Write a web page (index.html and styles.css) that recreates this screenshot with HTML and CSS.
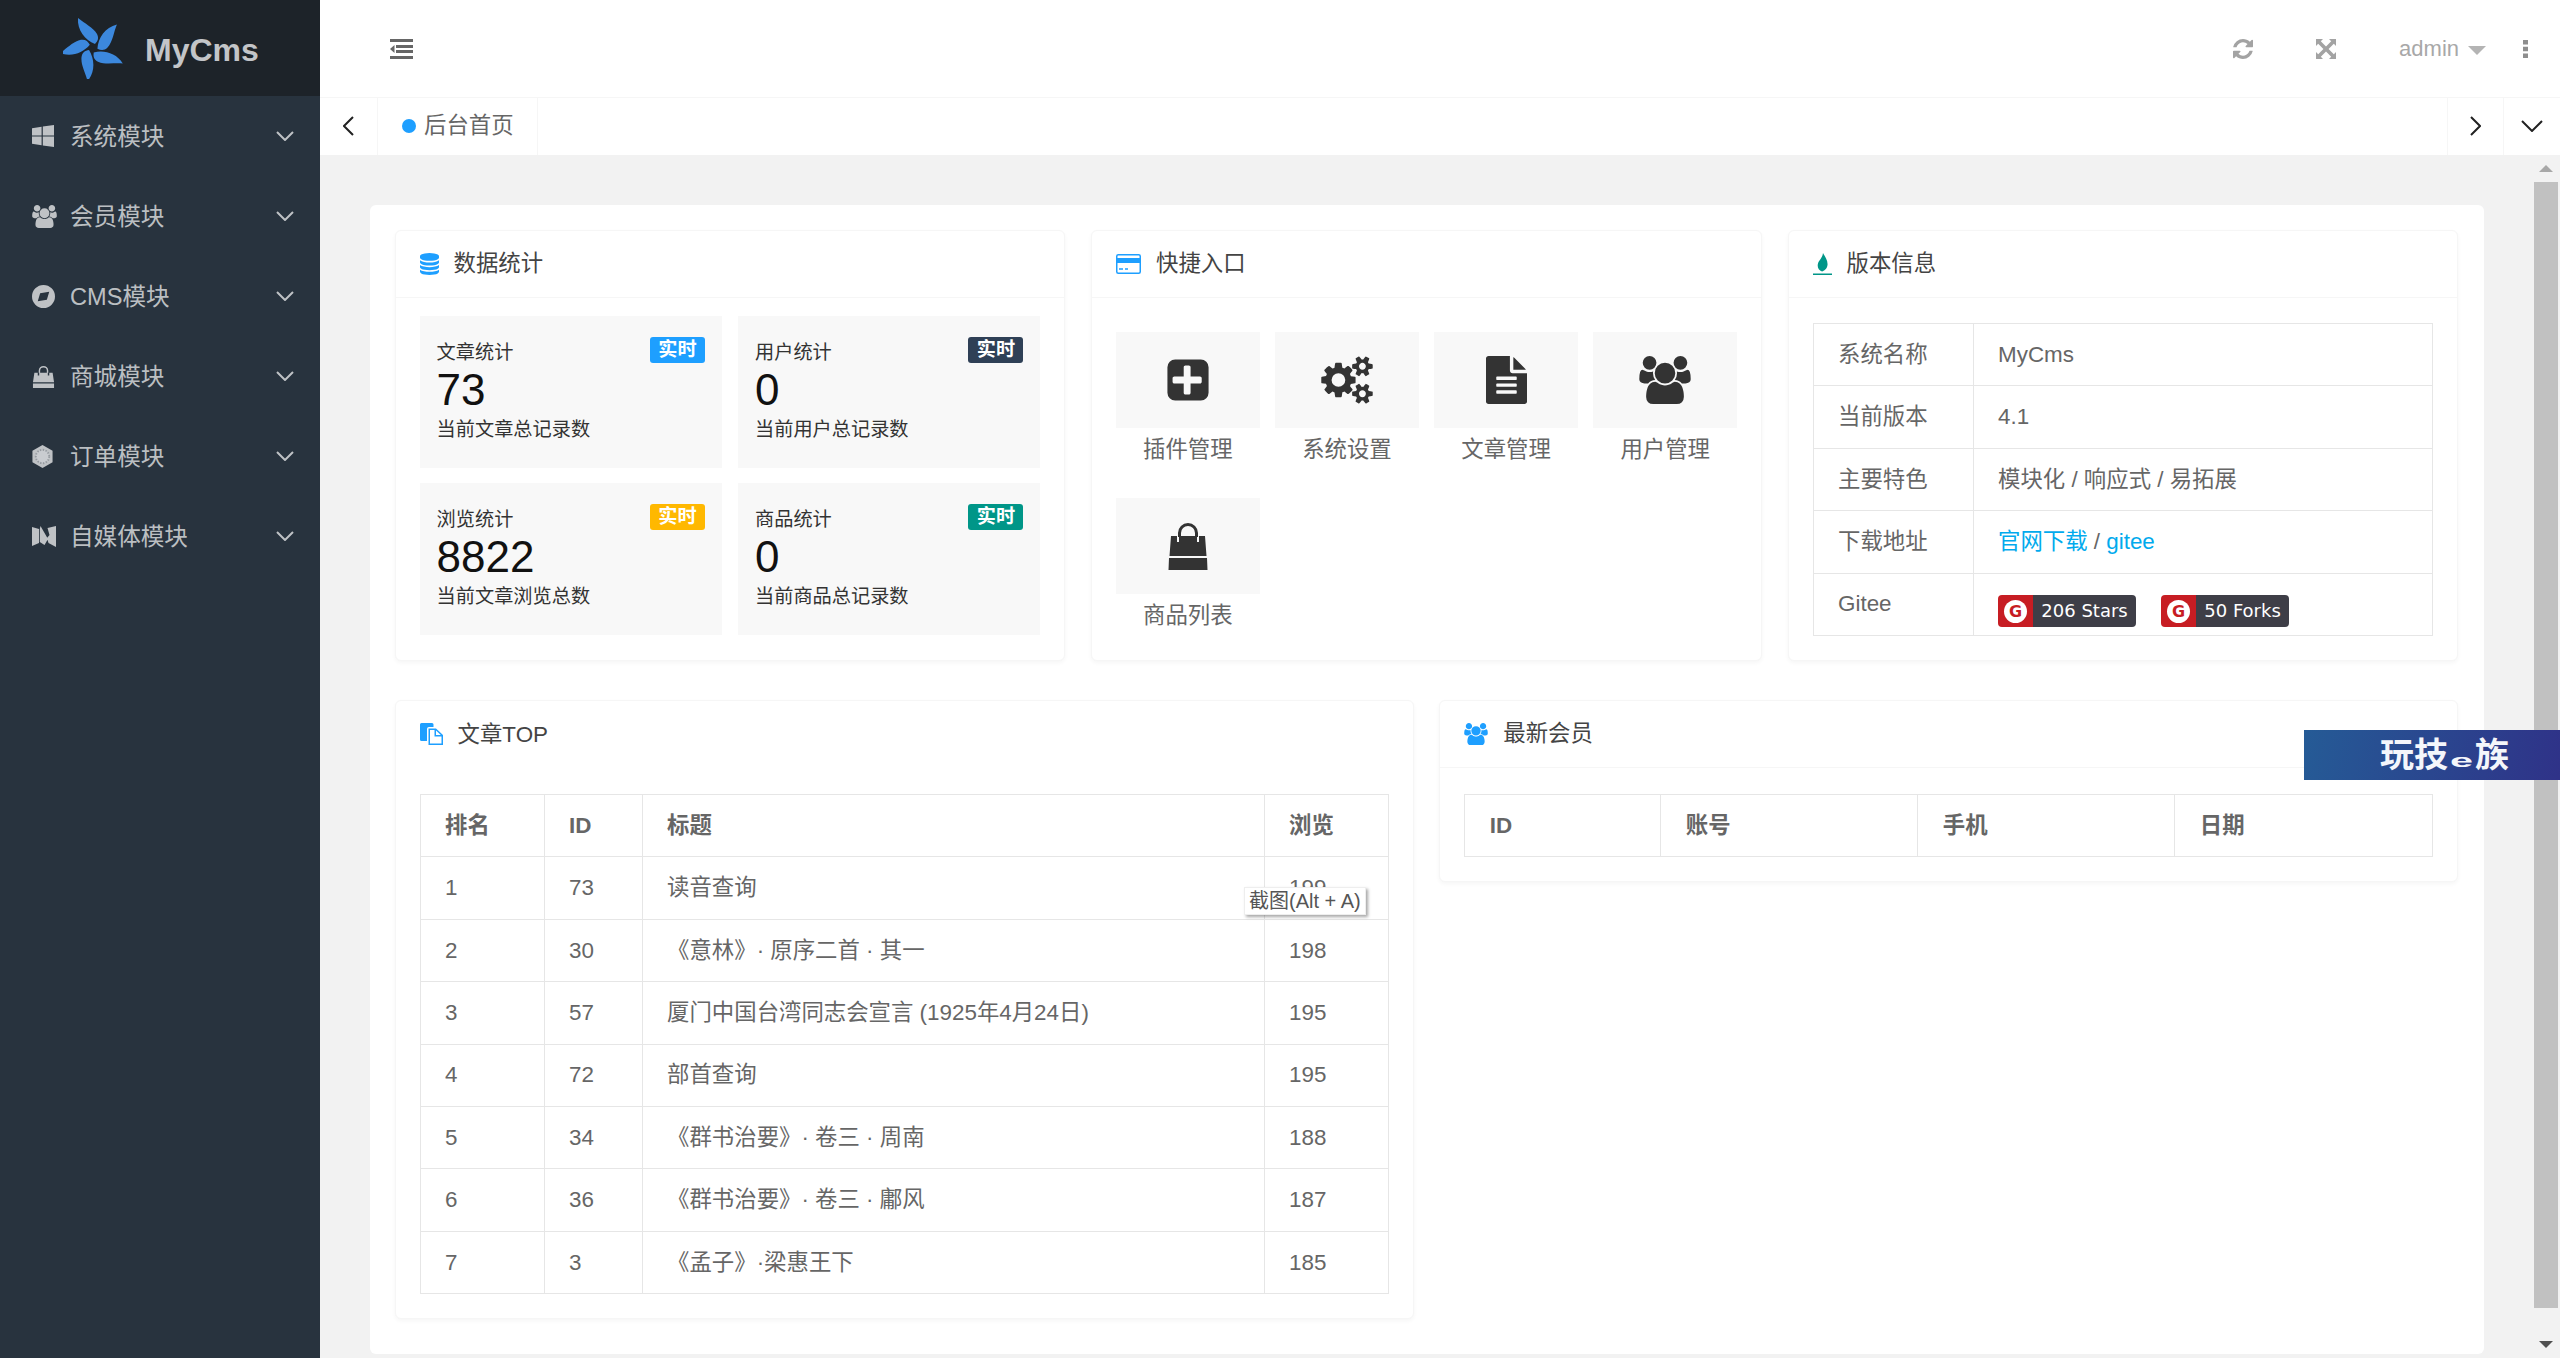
FILE: index.html
```html
<!DOCTYPE html>
<html lang="zh-CN">
<head>
  <meta charset="UTF-8">
  <title>MyCms</title>
  <link rel="stylesheet" href="styles.css">
</head>
<body>
  <svg class="icon-defs" width="0" height="0" aria-hidden="true">
    <defs>
      <path id="i-users" d="M593 896q-162 5-265 128h-134q-82 0-138-40.5t-56-118.5q0-353 124-353 6 0 43.5 21t97.5 42.5 119 21.5q67 0 133-23-5 37-5 66 0 139 81 256zm1071 637q0 120-73 189.5t-194 69.5h-874q-121 0-194-69.5t-73-189.5q0-53 3.5-103.5t14-109 26.5-108.5 43-97.5 62-81 85.5-53.5 111.5-20q10 0 43 21.5t73 48 107 48 135 21.5 135-21.5 107-48 73-48 43-21.5q61 0 111.5 20t85.5 53.5 62 81 43 97.5 26.5 108.5 14 109 3.5 103.5zm-1024-1277q0 106-75 181t-181 75-181-75-75-181 75-181 181-75 181 75 75 181zm704 384q0 159-112.5 271.5t-271.5 112.5-271.5-112.5-112.5-271.5 112.5-271.5 271.5-112.5 271.5 112.5 112.5 271.5zm576 225q0 78-56 118.5t-138 40.5h-134q-103-123-265-128 81-117 81-256 0-29-5-66 66 23 133 23 59 0 119-21.5t97.5-42.5 43.5-21q124 0 124 353zm-128-609q0 106-75 181t-181 75-181-75-75-181 75-181 181-75 181 75 75 181z"/>
      <polyline id="i-down" points="1,1 9,9 17,1" fill="none" stroke="currentColor" stroke-width="2"/>
      <path id="blade" d="M2-4C-8-8-16-18-15-30-8-24 0-21 4-14 6-10 5-7 2-4Z"/>
    </defs>
  </svg>

  <aside class="sidebar">
    <div class="logo">
      <svg width="60" height="62" viewBox="-30 -31 60 62" fill="#3c88dd">
        <use href="#blade"/>
        <use href="#blade" transform="rotate(72)"/>
        <use href="#blade" transform="rotate(144)"/>
        <use href="#blade" transform="rotate(216)"/>
        <use href="#blade" transform="rotate(288)"/>
      </svg>
      <span class="logo-text">MyCms</span>
    </div>
    <ul class="menu">
      <li class="menu-item">
        <span class="menu-icon">
          <svg width="22" height="22" viewBox="0 0 22 22" fill="currentColor"><path d="M0 3.2 9.6 1.8V10.4H0ZM10.8 1.6 22 0V10.4H10.8ZM0 11.6H9.6V20.2L0 18.8ZM10.8 11.6H22V22L10.8 20.4Z"/></svg>
        </span>
        <span class="menu-text">系统模块</span>
        <svg class="menu-arrow" width="18" height="10" viewBox="0 0 18 10"><use href="#i-down"/></svg>
      </li>
      <li class="menu-item">
        <span class="menu-icon">
          <svg width="25" height="23" viewBox="0 0 1920 1792" fill="currentColor"><use href="#i-users"/></svg>
        </span>
        <span class="menu-text">会员模块</span>
        <svg class="menu-arrow" width="18" height="10" viewBox="0 0 18 10"><use href="#i-down"/></svg>
      </li>
      <li class="menu-item">
        <span class="menu-icon">
          <svg width="23" height="23" viewBox="0 0 24 24" fill="currentColor"><path fill-rule="evenodd" d="M12 0a12 12 0 1 0 0 24 12 12 0 0 0 0-24ZM8.5 8.5 18 7l-2.500 8.500L6 17Z"/></svg>
        </span>
        <span class="menu-text">CMS模块</span>
        <svg class="menu-arrow" width="18" height="10" viewBox="0 0 18 10"><use href="#i-down"/></svg>
      </li>
      <li class="menu-item">
        <span class="menu-icon">
          <svg width="23" height="23" viewBox="0 0 24 24" fill="currentColor"><path d="M7 8V6a5 5 0 0 1 10 0v2h-1.500V6a3.500 3.500 0 0 0-7 0v2ZM2.500 8H6v3h1.500V8h9v3H18V8h3.500L23 18H1ZM1 19.200H23V24H1Z"/></svg>
        </span>
        <span class="menu-text">商城模块</span>
        <svg class="menu-arrow" width="18" height="10" viewBox="0 0 18 10"><use href="#i-down"/></svg>
      </li>
      <li class="menu-item">
        <span class="menu-icon">
          <svg width="21" height="23" viewBox="0 0 21 24"><path fill="currentColor" d="M10.500 0 21 6V18L10.500 24 0 18V6Z"/><circle cx="10.500" cy="12" r="7" fill="#c9ccd0" stroke="#959aa0" stroke-dasharray="1.500 1.500" stroke-width="2"/></svg>
        </span>
        <span class="menu-text">订单模块</span>
        <svg class="menu-arrow" width="18" height="10" viewBox="0 0 18 10"><use href="#i-down"/></svg>
      </li>
      <li class="menu-item">
        <span class="menu-icon">
          <svg width="24" height="21" viewBox="0 0 24 21" fill="currentColor"><path d="M0 1 7 3 7 17 0 20ZM8.500 0 16 13 12.500 19 7.800 16V3ZM15.500 2 24 0V18L24 21 16.500 17 15 12 17.500 9Z"/></svg>
        </span>
        <span class="menu-text">自媒体模块</span>
        <svg class="menu-arrow" width="18" height="10" viewBox="0 0 18 10"><use href="#i-down"/></svg>
      </li>
    </ul>
  </aside>

  <div class="main">
    <header class="topbar">
      <svg class="toggle" width="23" height="20" viewBox="0 0 23 20" fill="#666"><path d="M0 0H23V3H0ZM6 6H23V9H6ZM6 11H23V14H6ZM0 17H23V20H0ZM4.500 6V14L0 10Z"/></svg>
      <div class="top-right">
        <svg class="top-icon" width="20" height="20" viewBox="128 128 1536 1536" fill="#a3a3a3"><path d="M1639 1056q0 5-1 7-64 268-268 434.500t-478 166.500q-146 0-282.500-55t-243.500-157l-129 129q-19 19-45 19t-45-19-19-45v-448q0-26 19-45t45-19h448q26 0 45 19t19 45-19 45l-137 137q71 66 161 102t187 36q134 0 250-65t186-179q11-17 53-117 8-23 30-23h192q13 0 22.500 9.500t9.500 22.500zm25-800v448q0 26-19 45t-45 19h-448q-26 0-45-19t-19-45 19-45l138-138q-148-137-349-137-134 0-250 65t-186 179q-11 17-53 117-8 23-30 23h-199q-13 0-22.500-9.500t-9.500-22.500v-7q65-268 270-434.500t480-166.500q146 0 284 55.500t245 156.500l130-129q19-19 45-19t45 19 19 45z"/></svg>
        <svg class="top-icon" width="20" height="20" viewBox="0 0 20 20" fill="#a3a3a3"><path d="M0 0H7L4.800 2.200 10 7.400 15.200 2.200 13 0H20V7L17.800 4.800 12.600 10 17.800 15.200 20 13V20H13L15.200 17.800 10 12.600 4.800 17.800 7 20H0V13L2.200 15.200 7.400 10 2.200 4.800 0 7Z"/></svg>
        <span class="user-name">admin</span>
        <span class="caret"></span>
        <svg class="dots" width="5" height="18" viewBox="0 0 5 18" fill="#8e8e8e"><path d="M0 0H5V4.500H0ZM0 6.700H5V11.200H0ZM0 13.500H5V18H0Z"/></svg>
      </div>
    </header>

    <nav class="tabbar">
      <div class="tab-btn tab-btn-left">
        <svg width="11" height="20" viewBox="0 0 11 20"><polyline points="10,1 1,10 10,19" fill="none" stroke="#222" stroke-width="2"/></svg>
      </div>
      <div class="tab"><span class="tab-dot"></span>后台首页</div>
      <div class="tab-space"></div>
      <div class="tab-btn tab-btn-right">
        <svg width="11" height="20" viewBox="0 0 11 20"><polyline points="1,1 10,10 1,19" fill="none" stroke="#222" stroke-width="2"/></svg>
      </div>
      <div class="tab-btn tab-btn-menu">
        <svg width="22" height="12" viewBox="0 0 22 12"><polyline points="1,1 11,11 21,1" fill="none" stroke="#222" stroke-width="2"/></svg>
      </div>
    </nav>

    <div class="body-wrap">
      <div class="content">
        <div class="panel">
          <div class="row-three">
            <section class="card">
              <div class="card-head">
                <svg width="19" height="22" viewBox="128 0 1536 1792" fill="#1e9fff" preserveAspectRatio="none"><path d="M896 768q237 0 443-43t325-127v170q0 69-103 128t-280 93.500-385 34.500-385-34.500-280-93.500-103-128v-170q119 84 325 127t443 43zm0 768q237 0 443-43t325-127v170q0 69-103 128t-280 93.500-385 34.500-385-34.500-280-93.500-103-128v-170q119 84 325 127t443 43zm0-384q237 0 443-43t325-127v170q0 69-103 128t-280 93.500-385 34.500-385-34.500-280-93.500-103-128v-170q119 84 325 127t443 43zm0-1152q208 0 385 34.500t280 93.500 103 128v128q0 69-103 128t-280 93.500-385 34.500-385-34.500-280-93.500-103-128v-128q0-69 103-128t280-93.500 385-34.500z"/></svg>
                <span>数据统计</span>
              </div>
              <div class="stat-grid">
                <div class="stat">
                  <div class="stat-top"><span>文章统计</span><span class="badge badge-blue">实时</span></div>
                  <div class="stat-num">73</div>
                  <div class="stat-sub">当前文章总记录数</div>
                </div>
                <div class="stat">
                  <div class="stat-top"><span>用户统计</span><span class="badge badge-navy">实时</span></div>
                  <div class="stat-num">0</div>
                  <div class="stat-sub">当前用户总记录数</div>
                </div>
                <div class="stat">
                  <div class="stat-top"><span>浏览统计</span><span class="badge badge-orange">实时</span></div>
                  <div class="stat-num">8822</div>
                  <div class="stat-sub">当前文章浏览总数</div>
                </div>
                <div class="stat">
                  <div class="stat-top"><span>商品统计</span><span class="badge badge-green">实时</span></div>
                  <div class="stat-num">0</div>
                  <div class="stat-sub">当前商品总记录数</div>
                </div>
              </div>
            </section>

            <section class="card">
              <div class="card-head">
                <svg width="25" height="20" viewBox="0 0 25 20"><rect x="0.750" y="0.750" width="23.500" height="18.500" rx="1.500" fill="#fff" stroke="#1e9fff" stroke-width="1.500"/><rect x="0" y="4" width="25" height="5" fill="#1e9fff"/><path d="M3 15H7M9 15H12" stroke="#1e9fff" stroke-width="1.500"/></svg>
                <span>快捷入口</span>
              </div>
              <div class="quick-grid">
                <div class="quick">
                  <div class="quick-tile"><svg width="48" height="48" viewBox="0 0 1792 1792" fill="#333"><path d="M1408 960v-128q0-26-19-45t-45-19h-352v-352q0-26-19-45t-45-19h-128q-26 0-45 19t-19 45v352h-352q-26 0-45 19t-19 45v128q0 26 19 45t45 19h352v352q0 26 19 45t45 19h128q26 0 45-19t19-45v-352h352q26 0 45-19t19-45zm256-544v960q0 119-84.500 203.500t-203.500 84.500h-960q-119 0-203.500-84.500t-84.500-203.500v-960q0-119 84.500-203.500t203.500-84.500h960q119 0 203.500 84.500t84.500 203.500z"/></svg></div>
                  <div class="quick-label">插件管理</div>
                </div>
                <div class="quick">
                  <div class="quick-tile"><svg width="52" height="48" viewBox="0 0 1920 1792" fill="#333"><path d="M896 896q0-106-75-181t-181-75-181 75-75 181 75 181 181 75 181-75 75-181zm768 512q0-52-38-90t-90-38-90 38-38 90q0 53 37.500 90.500t90.500 37.500 90.500-37.500 37.500-90.500zm0-1024q0-52-38-90t-90-38-90 38-38 90q0 53 37.500 90.500t90.500 37.500 90.500-37.500 37.500-90.500zm-384 421v185q0 10-7 19.500t-16 10.500l-155 24q-11 35-32 76 34 48 90 115 7 11 7 20 0 12-7 19-23 30-82.500 89.500t-78.500 59.500q-11 0-21-7l-115-90q-37 19-77 31-11 108-23 155-7 24-30 24h-186q-11 0-20-7.500t-10-17.500l-23-153q-34-10-75-31l-118 89q-7 7-20 7-11 0-21-8-144-133-144-160 0-9 7-19 10-14 41-53t47-61q-23-44-35-82l-152-24q-10-1-17-9.500t-7-19.500v-185q0-10 7-19.500t16-10.500l155-24q11-35 32-76-34-48-90-115-7-11-7-20 0-12 7-20 22-30 82-89t79-59q11 0 21 7l115 90q34-18 77-32 11-108 23-154 7-24 30-24h186q11 0 20 7.500t10 17.500l23 153q34 10 75 31l118-89q8-7 20-7 11 0 21 8 144 133 144 160 0 8-7 19-12 16-42 54t-45 60q23 48 34 82l152 23q10 2 17 10.500t7 19.500zm640 533v140q0 16-149 31-12 27-30 52 51 113 51 138 0 4-4 7-122 71-124 71-8 0-46-47t-52-68q-20 2-30 2t-30-2q-14 21-52 68t-46 47q-2 0-124-71-4-3-4-7 0-25 51-138-18-25-30-52-149-15-149-31v-140q0-16 149-31 13-29 30-52-51-113-51-138 0-4 4-7 4-2 35-20t59-34 30-16q8 0 46 46.500t52 67.500q20-2 30-2t30 2q51-71 92-112l6-2q4 0 124 70 4 3 4 7 0 25-51 138 17 23 30 52 149 15 149 31zm0-1024v140q0 16-149 31-12 27-30 52 51 113 51 138 0 4-4 7-122 71-124 71-8 0-46-47t-52-68q-20 2-30 2t-30-2q-14 21-52 68t-46 47q-2 0-124-71-4-3-4-7 0-25 51-138-18-25-30-52-149-15-149-31v-140q0-16 149-31 13-29 30-52-51-113-51-138 0-4 4-7 4-2 35-20t59-34 30-16q8 0 46 46.500t52 67.500q20-2 30-2t30 2q51-71 92-112l6-2q4 0 124 70 4 3 4 7 0 25-51 138 17 23 30 52 149 15 149 31z"/></svg></div>
                  <div class="quick-label">系统设置</div>
                </div>
                <div class="quick">
                  <div class="quick-tile"><svg width="41" height="48" viewBox="128 0 1536 1792" fill="#333" preserveAspectRatio="none"><path d="M1596 476q14 14 28 36h-472v-472q22 14 36 28zm-476 164h544v1056q0 40-28 68t-68 28h-1344q-40 0-68-28t-28-68v-1600q0-40 28-68t68-28h800v544q0 40 28 68t68 28zm160 736v-64q0-14-9-23t-23-9h-704q-14 0-23 9t-9 23v64q0 14 9 23t23 9h704q14 0 23-9t9-23zm0-256v-64q0-14-9-23t-23-9h-704q-14 0-23 9t-9 23v64q0 14 9 23t23 9h704q14 0 23-9t9-23zm0-256v-64q0-14-9-23t-23-9h-704q-14 0-23 9t-9 23v64q0 14 9 23t23 9h704q14 0 23-9t9-23z"/></svg></div>
                  <div class="quick-label">文章管理</div>
                </div>
                <div class="quick">
                  <div class="quick-tile"><svg width="52" height="48" viewBox="0 0 1920 1792" fill="#333"><use href="#i-users"/></svg></div>
                  <div class="quick-label">用户管理</div>
                </div>
                <div class="quick">
                  <div class="quick-tile"><svg width="48" height="48" viewBox="0 0 48 48" fill="#333"><path d="M14 15V11a10 10 0 0 1 20 0v4H31V11a7 7 0 0 0-14 0v4ZM7 14H13V20H15V14H33V20H35V14H41L42.500 34H5.500ZM5 36H43L43.500 48H4.500Z"/></svg></div>
                  <div class="quick-label">商品列表</div>
                </div>
              </div>
            </section>

            <section class="card">
              <div class="card-head">
                <svg width="19" height="22" viewBox="0 0 19 22" fill="#009688"><path d="M10 0C12 4 15 7 14.500 12 14 16 11 18 9 18.500 5.500 17.500 4 14 5 10.500 6 7 9.500 5 10 0ZM0 20.500H19V22H0Z"/></svg>
                <span>版本信息</span>
              </div>
              <div class="card-body">
                <table class="data-table info-table">
                  <tr><td class="col-label">系统名称</td><td>MyCms</td></tr>
                  <tr><td>当前版本</td><td>4.1</td></tr>
                  <tr><td>主要特色</td><td>模块化 / 响应式 / 易拓展</td></tr>
                  <tr><td>下载地址</td><td class="link-cell"><a href="#">官网下载</a> / <a href="#">gitee</a></td></tr>
                  <tr>
                    <td>Gitee</td>
                    <td class="badge-cell">
                      <div class="gitee-row">
                        <span class="gitee-badge gitee-stars"><span class="gitee-logo"><span class="gitee-g">G</span></span><span class="gitee-count">206 Stars</span></span>
                        <span class="gitee-badge gitee-forks"><span class="gitee-logo"><span class="gitee-g">G</span></span><span class="gitee-count">50 Forks</span></span>
                      </div>
                    </td>
                  </tr>
                </table>
              </div>
            </section>
          </div>

          <div class="row-two">
            <section class="card">
              <div class="card-head no-line">
                <svg width="23" height="22" viewBox="0 0 23 22" fill="#1e9fff"><path d="M0 1.500Q0 0 1.500 0H12Q13.500 0 13.500 1.500V4H9Q7 4 7 6V18H1.500Q0 18 0 16.500Z"/><path fill-rule="evenodd" d="M8.500 5.500H16L23 12V22H8.500ZM10 7V20.500H21.500V13.500H14.500V7ZM16 7.500V12H20.800Z"/></svg>
                <span>文章TOP</span>
              </div>
              <div class="card-body">
                <table class="data-table top-table">
                  <thead>
                    <tr><th class="col-rank">排名</th><th class="col-id">ID</th><th class="col-title">标题</th><th>浏览</th></tr>
                  </thead>
                  <tbody>
                    <tr><td>1</td><td>73</td><td>读音查询</td><td>199</td></tr>
                    <tr><td>2</td><td>30</td><td>《意林》· 原序二首 · 其一</td><td>198</td></tr>
                    <tr><td>3</td><td>57</td><td>厦门中国台湾同志会宣言 (1925年4月24日)</td><td>195</td></tr>
                    <tr><td>4</td><td>72</td><td>部首查询</td><td>195</td></tr>
                    <tr><td>5</td><td>34</td><td>《群书治要》· 卷三 · 周南</td><td>188</td></tr>
                    <tr><td>6</td><td>36</td><td>《群书治要》· 卷三 · 鄘风</td><td>187</td></tr>
                    <tr><td>7</td><td>3</td><td>《孟子》·梁惠王下</td><td>185</td></tr>
                  </tbody>
                </table>
              </div>
            </section>

            <section class="card">
              <div class="card-head">
                <svg width="24" height="22" viewBox="0 0 1920 1792" fill="#1e9fff"><use href="#i-users"/></svg>
                <span>最新会员</span>
              </div>
              <div class="card-body">
                <table class="data-table member-table">
                  <thead>
                    <tr><th class="col-mid">ID</th><th class="col-account">账号</th><th class="col-phone">手机</th><th>日期</th></tr>
                  </thead>
                </table>
              </div>
            </section>
          </div>
        </div>
      </div>

      <div class="scrollbar">
        <div class="scroll-btn"><span class="arrow-up"></span></div>
        <div class="scroll-thumb"></div>
        <div class="scroll-btn scroll-btn-down"><span class="arrow-down"></span></div>
      </div>
    </div>
  </div>

  <div class="tooltip">截图(Alt + A)</div>
  <div class="watermark">玩技<span class="watermark-e">e</span>族</div>
</body>
</html>
```

FILE: styles.css
```css
* {
  box-sizing: border-box;
}

html, body {
  margin: 0;
  padding: 0;
  height: 100%;
}

body {
  position: relative;
  display: flex;
  height: 100vh;
  overflow: hidden;
  font-family: "Liberation Sans", "Noto Sans CJK SC", sans-serif;
  font-size: 22.4px;
  line-height: 1.5;
  text-spacing-trim: space-all;
  color: #666;
  background-color: #f2f2f2;
}

.icon-defs {
  position: absolute;
}

/* sidebar */
.sidebar {
  width: 320px;
  flex-shrink: 0;
  background-color: #28333e;
  color: rgba(255, 255, 255, 0.7);
}

.logo {
  height: 96px;
  display: flex;
  align-items: center;
  padding-left: 63px;
  gap: 22px;
  background-color: #1d2329;
}

.logo-text {
  margin-top: 4px;
  font-size: 32px;
  font-weight: bold;
  color: #c3c5c8;
}

.menu {
  list-style: none;
  margin: 0;
  padding: 0;
}

.menu-item {
  height: 80px;
  display: flex;
  align-items: center;
  padding: 0 26px 0 32px;
  font-size: 23.6px;
}

.menu-icon {
  width: 38px;
  height: 24px;
  display: flex;
  align-items: center;
}

.menu-text {
  flex: 1;
  padding-top: 3px;
}

.menu-arrow {
  flex-shrink: 0;
}

/* top */
.main {
  flex: 1;
  min-width: 0;
  display: flex;
  flex-direction: column;
}

.topbar {
  height: 97px;
  flex-shrink: 0;
  display: flex;
  align-items: center;
  justify-content: space-between;
  padding: 0 32px 0 70px;
  background-color: #fff;
}

.top-right {
  display: flex;
  align-items: center;
  color: #a3a3a3;
}

.top-icon {
  margin-right: 63px;
}

.user-name {
  font-size: 22px;
  color: #a8a8a8;
}

.caret {
  width: 0;
  height: 0;
  margin: 4px 37px 0 9px;
  border-left: 9px solid transparent;
  border-right: 9px solid transparent;
  border-top: 9px solid #b4b4b4;
}

.tabbar {
  height: 58px;
  flex-shrink: 0;
  display: flex;
  background-color: #fff;
  border-top: 1px solid #f6f6f6;
}

.tab-btn {
  display: flex;
  align-items: center;
  justify-content: center;
  width: 56px;
  padding-bottom: 2px;
}

.tab-btn-left {
  width: 58px;
  border-right: 1px solid #f6f6f6;
}

.tab-btn-right,
.tab-btn-menu {
  border-left: 1px solid #f6f6f6;
}

.tab-btn-menu {
  width: 57px;
}

.tab {
  width: 160px;
  display: flex;
  align-items: center;
  padding: 0 0 1px 24px;
  border-right: 1px solid #f6f6f6;
  color: #666;
}

.tab-dot {
  width: 14px;
  height: 14px;
  margin-right: 8px;
  border-radius: 50%;
  background-color: #1e9fff;
}

.tab-space {
  flex: 1;
}

/* content */
.body-wrap {
  flex: 1;
  min-height: 0;
  display: flex;
}

.content {
  flex: 1;
  min-width: 0;
  padding: 50px 50px 0;
}

.panel {
  padding: 25px 25.6px 35px 24.6px;
  border-radius: 6px;
  background-color: #fff;
}

.row-three {
  display: grid;
  grid-template-columns: repeat(3, 1fr);
  column-gap: 25.6px;
  margin-bottom: 39px;
}

.row-two {
  display: grid;
  grid-template-columns: repeat(2, 1fr);
  column-gap: 25.6px;
  align-items: start;
}

.row-two .card-body {
  padding-top: 26px;
}

.card {
  border: 1px solid #f6f6f6;
  border-radius: 6px;
  background-color: #fff;
  box-shadow: 0 2px 4px rgba(0, 0, 0, 0.04);
}

.card-head {
  height: 67px;
  display: flex;
  align-items: center;
  gap: 15px;
  padding-left: 24px;
  border-bottom: 1px solid #f6f6f6;
  color: #444;
}

.card-head.no-line {
  border-bottom: none;
}

.card-body {
  padding: 25px 24px 24px;
}

/* stats */
.stat-grid {
  display: grid;
  grid-template-columns: 1fr 1fr;
  gap: 15px 16px;
  padding: 18px 24px 23px;
}

.stat {
  height: 152px;
  padding: 21px 17px 0;
  background-color: #f8f8f8;
  font-size: 19.2px;
  color: #333;
}

.stat-top {
  display: flex;
  justify-content: space-between;
  height: 30px;
  line-height: 32px;
}

.badge {
  width: 55px;
  height: 26px;
  line-height: 26px;
  text-align: center;
  border-radius: 3px;
  font-weight: bold;
  color: #fff;
}

.badge-blue { background-color: #1e9fff; }
.badge-navy { background-color: #2f4056; }
.badge-orange { background-color: #ffb800; }
.badge-green { background-color: #009688; }

.stat-num {
  height: 44px;
  line-height: 45px;
  font-size: 44px;
  color: #111;
}

.stat-sub {
  line-height: 38px;
}

/* quick links */
.quick-grid {
  display: grid;
  grid-template-columns: repeat(4, 1fr);
  column-gap: 15.6px;
  row-gap: 28px;
  padding: 34px 24px 20px;
}

.quick {
  text-align: center;
}

.quick-tile {
  height: 96px;
  display: flex;
  align-items: center;
  justify-content: center;
  background-color: #f8f8f8;
}

.quick-label {
  height: 42px;
  line-height: 44px;
}

/* tables */
.data-table {
  width: 100%;
  table-layout: fixed;
  border-collapse: collapse;
  color: #666;
}

.data-table th,
.data-table td {
  height: 62.4px;
  padding: 0 24.5px;
  border: 1.5px solid #e6e6e6;
  text-align: left;
}

.col-label { width: 160px; }
.col-rank { width: 124px; }
.col-id { width: 98px; }
.col-title { width: 622px; }
.col-mid { width: 196px; }
.col-account { width: 257px; }
.col-phone { width: 257px; }

.link-cell a {
  color: #01aaed;
  text-decoration: none;
}

.data-table td.badge-cell {
  padding-top: 14px;
}

.gitee-row {
  display: flex;
  gap: 25px;
}

.gitee-badge {
  display: flex;
  height: 32px;
  border-radius: 4px;
  overflow: hidden;
  font-family: "DejaVu Sans", sans-serif;
  font-size: 18px;
  color: #fff;
}

.gitee-stars { width: 138px; }
.gitee-forks { width: 128px; }

.gitee-logo {
  width: 35px;
  display: flex;
  align-items: center;
  justify-content: center;
  background-color: #c71d23;
}

.gitee-g {
  width: 23px;
  height: 23px;
  line-height: 23px;
  text-align: center;
  border-radius: 50%;
  background-color: #fff;
  color: #c71d23;
  font-size: 16px;
  font-weight: bold;
}

.gitee-count {
  flex: 1;
  line-height: 32px;
  text-align: center;
  background-color: #3e3e47;
}

/* scrollbar */
.scrollbar {
  width: 26px;
  flex-shrink: 0;
  display: flex;
  flex-direction: column;
  padding-right: 2px;
}

.scroll-btn {
  height: 27px;
  display: flex;
  align-items: center;
  justify-content: center;
}

.scroll-btn-down {
  margin-top: 22px;
  height: 28px;
}

.arrow-up {
  border-left: 7px solid transparent;
  border-right: 7px solid transparent;
  border-bottom: 7px solid #a8a8a8;
}

.arrow-down {
  border-left: 7px solid transparent;
  border-right: 7px solid transparent;
  border-top: 7px solid #505050;
}

.scroll-thumb {
  flex: 1;
  background-color: #c1c1c1;
}

/* overlays */
.tooltip {
  position: absolute;
  left: 1244px;
  top: 887px;
  height: 28px;
  line-height: 26px;
  padding: 0 4px;
  font-size: 20px;
  color: #555;
  background-color: #fff;
  border: 1px solid #eee;
  box-shadow: 2px 2px 3px rgba(0, 0, 0, 0.35);
}

.watermark {
  position: absolute;
  left: 2304px;
  top: 730px;
  width: 256px;
  height: 50px;
  line-height: 50px;
  padding-left: 76px;
  font-size: 34px;
  font-weight: bold;
  color: #f4f6fb;
  background: linear-gradient(100deg, #255b96, #2f3288);
}

.watermark-e {
  display: inline-block;
  width: 27px;
  text-align: center;
  font-size: 18px;
  transform: scaleX(2.3);
}
```
